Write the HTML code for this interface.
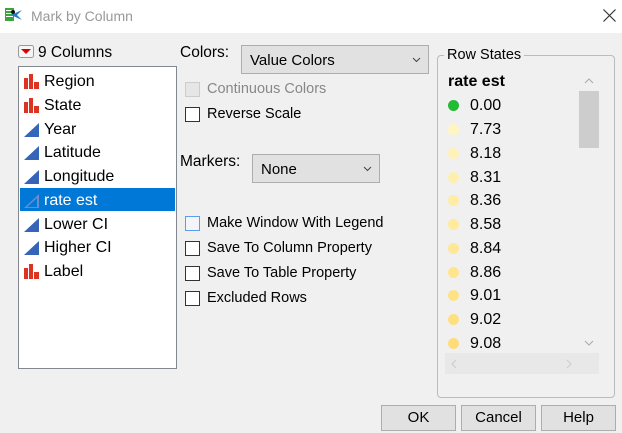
<!DOCTYPE html>
<html><head><style>
*{margin:0;padding:0;box-sizing:border-box}
body{width:622px;height:433px;background:#f0f0f0;font-family:"Liberation Sans",sans-serif;position:relative;overflow:hidden;color:#000}
.a{position:absolute;white-space:nowrap}
.t{font-size:14.5px}
.cb{position:absolute;width:15px;height:15px;border:1px solid #333;background:#fff}
.li{position:absolute;left:24px;font-size:16px;height:24px;line-height:24px;width:151px}
.li span{position:absolute;left:20px;top:1px}
.ic{position:absolute;left:0;top:5px}
.rs{position:absolute;left:448px;font-size:16px;height:24px;line-height:24px}
.rs i{position:absolute;left:0;top:7px;width:11px;height:11px;border-radius:50%}
.rs span{position:absolute;left:22px;top:1px}
.btn{position:absolute;top:405px;width:75px;height:26px;border:1px solid #adadad;background:#e1e1e1;font-size:15px;text-align:center;line-height:24px}
.dd{position:absolute;border:1px solid #adadad;background:#e1e1e1;font-size:15px}
</style></head><body>
<div class="a" style="left:0;top:0;width:622px;height:33px;background:#fff"></div>
<svg class="a" style="left:5px;top:7px" width="18" height="16"><rect x="0" y="1" width="9" height="13" fill="#3aa53a"/><rect x="1" y="3" width="7" height="1" fill="#fff"/><rect x="1" y="6" width="7" height="1" fill="#fff"/><rect x="1" y="9" width="7" height="1" fill="#fff"/><path d="M6 8 L17 3 L12 8 L17 13 Z" fill="#1b7fd0"/><circle cx="8" cy="5" r="2" fill="#111"/></svg>
<div class="a" style="left:31px;top:8px;font-size:14px;color:#999">Mark by Column</div>
<svg class="a" style="left:603px;top:9px" width="13" height="13"><path d="M0.5 0.5 L12.5 12.5 M12.5 0.5 L0.5 12.5" stroke="#333" stroke-width="1.2"/></svg>

<svg class="a" style="left:18px;top:45px" width="17" height="14"><rect x="0.5" y="0.5" width="15" height="12" rx="2" fill="#f5f5f5" stroke="#999"/><path d="M3 4 L13 4 L8 9 Z" fill="#d00"/></svg>
<div class="a" style="left:38px;top:44px;font-size:15.5px">9 Columns</div>
<div class="a" style="left:18px;top:66px;width:159px;height:303px;background:#fff;border:1px solid #828790"></div>
<div class="a" style="left:20px;top:188px;width:155px;height:23px;background:#0078d7"></div>

<div class="li" style="top:69px"><svg class="ic" width="16" height="15"><rect x="0" y="4" width="4" height="11" fill="#d32"/><rect x="5" y="0" width="4" height="15" fill="#d32"/><rect x="10" y="8" width="5" height="7" fill="#d32"/></svg><span>Region</span></div>
<div class="li" style="top:93px"><svg class="ic" width="16" height="15"><rect x="0" y="4" width="4" height="11" fill="#d32"/><rect x="5" y="0" width="4" height="15" fill="#d32"/><rect x="10" y="8" width="5" height="7" fill="#d32"/></svg><span>State</span></div>
<div class="li" style="top:117px"><svg class="ic" width="16" height="15"><path d="M0 15 L15 1 L15 15 Z" fill="#3565b8"/></svg><span>Year</span></div>
<div class="li" style="top:140px"><svg class="ic" width="16" height="15"><path d="M0 15 L15 1 L15 15 Z" fill="#3565b8"/></svg><span>Latitude</span></div>
<div class="li" style="top:164px"><svg class="ic" width="16" height="15"><path d="M0 15 L15 1 L15 15 Z" fill="#3565b8"/></svg><span>Longitude</span></div>
<div class="li" style="top:188px;color:#fff"><svg class="ic" width="16" height="15"><path d="M0 15 L15 1 L15 15 Z" fill="#6a8cc8"/><path d="M3 14 L13 5 L13 14 Z" fill="#0078d7"/></svg><span>rate est</span></div>
<div class="li" style="top:212px"><svg class="ic" width="16" height="15"><path d="M0 15 L15 1 L15 15 Z" fill="#3565b8"/></svg><span>Lower CI</span></div>
<div class="li" style="top:235px"><svg class="ic" width="16" height="15"><path d="M0 15 L15 1 L15 15 Z" fill="#3565b8"/></svg><span>Higher CI</span></div>
<div class="li" style="top:259px"><svg class="ic" width="16" height="15"><rect x="0" y="4" width="4" height="11" fill="#d32"/><rect x="5" y="0" width="4" height="15" fill="#d32"/><rect x="10" y="8" width="5" height="7" fill="#d32"/></svg><span>Label</span></div>

<div class="a t" style="left:180px;top:44px;font-size:15.5px">Colors:</div>
<div class="dd" style="left:241px;top:45px;width:188px;height:29px"><span class="a" style="left:8px;top:6px">Value Colors</span><svg class="a" style="left:170px;top:11px" width="9" height="6"><path d="M1 1 L4.5 4.5 L8 1" stroke="#444" fill="none"/></svg></div>
<div class="cb" style="left:185px;top:82px;background:#e6e6e6;border-color:#ccc"></div>
<div class="a t" style="left:207px;top:81px;color:#888">Continuous Colors</div>
<div class="cb" style="left:185px;top:107px"></div>
<div class="a t" style="left:207px;top:106px">Reverse Scale</div>
<div class="a t" style="left:180px;top:153px;font-size:15.5px">Markers:</div>
<div class="dd" style="left:252px;top:154px;width:128px;height:29px"><span class="a" style="left:8px;top:6px">None</span><svg class="a" style="left:110px;top:11px" width="9" height="6"><path d="M1 1 L4.5 4.5 L8 1" stroke="#444" fill="none"/></svg></div>
<div class="cb" style="left:185px;top:216px;border-color:#5c9de6;background:#f2f6fc"></div>
<div class="a t" style="left:207px;top:215px">Make Window With Legend</div>
<div class="cb" style="left:185px;top:241px"></div>
<div class="a t" style="left:207px;top:240px">Save To Column Property</div>
<div class="cb" style="left:185px;top:266px"></div>
<div class="a t" style="left:207px;top:265px">Save To Table Property</div>
<div class="cb" style="left:185px;top:291px"></div>
<div class="a t" style="left:207px;top:290px">Excluded Rows</div>

<div class="a" style="left:437px;top:55px;width:178px;height:343px;border:1px solid #bbb;border-radius:4px"></div>
<div class="a t" style="left:444px;top:47px;background:#f0f0f0;padding:0 3px;font-size:14.5px">Row States</div>
<div class="a" style="left:448px;top:73px;font-size:16px;font-weight:bold">rate est</div>
<div class="a" style="left:579px;top:70px;width:20px;height:282px;background:#f0f0f0"></div>
<div class="a" style="left:579px;top:91px;width:20px;height:57px;background:#cdcdcd"></div>
<svg class="a" style="left:584px;top:78px" width="10" height="6"><path d="M1 5 L5 1 L9 5" stroke="#aaa" fill="none"/></svg>
<svg class="a" style="left:584px;top:340px" width="10" height="6"><path d="M1 1 L5 5 L9 1" stroke="#aaa" fill="none"/></svg>
<div class="a" style="left:445px;top:353px;width:154px;height:21px;background:#e8e8e8"></div>
<svg class="a" style="left:451px;top:359px" width="6" height="10"><path d="M5 1 L1 5 L5 9" stroke="#ccc" fill="none"/></svg>
<svg class="a" style="left:566px;top:359px" width="6" height="10"><path d="M1 1 L5 5 L1 9" stroke="#ccc" fill="none"/></svg>
<div class="rs" style="top:93px"><i style="background:#22bb33"></i><span>0.00</span></div>
<div class="rs" style="top:117px"><i style="background:#fff5c0"></i><span>7.73</span></div>
<div class="rs" style="top:141px"><i style="background:#fff2b6"></i><span>8.18</span></div>
<div class="rs" style="top:165px"><i style="background:#ffefae"></i><span>8.31</span></div>
<div class="rs" style="top:188px"><i style="background:#ffeca6"></i><span>8.36</span></div>
<div class="rs" style="top:212px"><i style="background:#ffea9e"></i><span>8.58</span></div>
<div class="rs" style="top:236px"><i style="background:#ffe796"></i><span>8.84</span></div>
<div class="rs" style="top:260px"><i style="background:#ffe58e"></i><span>8.86</span></div>
<div class="rs" style="top:283px"><i style="background:#ffe286"></i><span>9.01</span></div>
<div class="rs" style="top:307px"><i style="background:#ffe07e"></i><span>9.02</span></div>
<div class="rs" style="top:331px"><i style="background:#ffdc78"></i><span>9.08</span></div>

<div class="btn" style="left:381px">OK</div>
<div class="btn" style="left:461px">Cancel</div>
<div class="btn" style="left:541px">Help</div>
</body></html>
